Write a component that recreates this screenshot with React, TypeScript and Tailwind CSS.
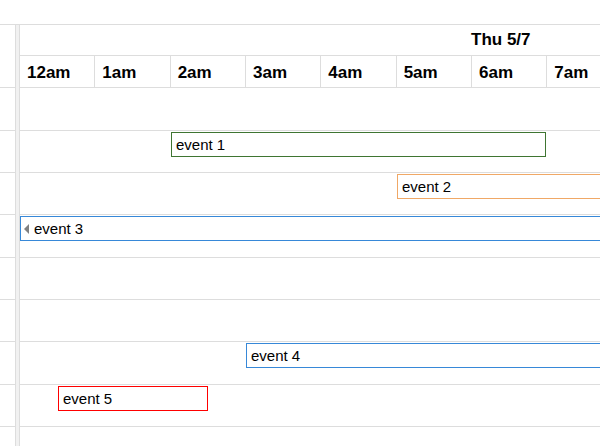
import React from "react";

// only the slots that fit in the visible window
const hours = ["12am", "1am", "2am", "3am", "4am", "5am", "6am", "7am"];

type Ev = { title: string; pos: string; border: string; cut?: boolean };
type Row = { h: string; ev?: Ev };

// resource rows, heights snapped to whole pixels
const rows: Row[] = [
  { h: "h-[43px]" },
  { h: "h-[42px]", ev: { title: "event 1", pos: "ml-[151px] w-[375px]", border: "border-[#3f7532]" } },
  { h: "h-[42px]", ev: { title: "event 2", pos: "ml-[377px] w-[900px]", border: "border-[#f0a866]" } },
  { h: "h-[43px]", ev: { title: "event 3", pos: "ml-0 w-[1200px]", border: "border-[#3788d8]", cut: true } },
  { h: "h-[42px]" },
  { h: "h-[42px]" },
  { h: "h-[43px]", ev: { title: "event 4", pos: "ml-[226px] w-[900px]", border: "border-[#3788d8]" } },
  { h: "h-[42px]", ev: { title: "event 5", pos: "ml-[38px] w-[150px]", border: "border-[#ff0000]" } },
  { h: "h-[42px]" },
];

function EventBar({ ev }: { ev: Ev }) {
  return (
    <div
      className={`h-[25px] shrink-0 border bg-white flex items-center pl-[4px] text-[15px] leading-none whitespace-nowrap ${ev.pos} ${ev.border}`}
    >
      {ev.cut && (
        <span className="mr-[5px] ml-[-1px] w-0 h-0 border-y-[5px] border-y-transparent border-r-[5px] border-r-[#808080]" />
      )}
      {ev.title}
    </div>
  );
}

export default function App() {
  return (
    <div className="w-[600px] h-[446px] overflow-hidden bg-white text-black font-['Liberation_Sans',Arial,sans-serif]">
      <div className="h-[24px]" />
      <div className="flex border-t border-[#ddd]">
        {/* resource column */}
        <div className="w-[15px] shrink-0">
          <div className="h-[63px] border-b border-[#ddd]" />
          {rows.map((r, i) => (
            <div key={i} className={`${r.h} border-b border-[#ddd]`} />
          ))}
        </div>

        {/* divider */}
        <div className="w-[5px] shrink-0 border-x border-[#ddd] bg-[#f1f1f1]" />

        {/* timeline */}
        <div className="flex-1 overflow-hidden">
          <div className="w-[1808px]">
            <div className="h-[31px] border-b border-[#ddd] flex items-center pl-[451px] text-[17px] font-bold">
              Thu 5/7
            </div>
            <div className="h-[32px] border-b border-[#ddd] flex">
              {hours.map((h) => (
                <div
                  key={h}
                  className="w-[75.33px] shrink-0 border-r border-[#ddd] flex items-center pl-[7px] pt-[2px] text-[17px] font-bold"
                >
                  {h}
                </div>
              ))}
            </div>
            {rows.map((r, i) => (
              <div key={i} className={`${r.h} border-b border-[#ddd] pt-[1px] flex flex-col`}>
                {r.ev && <EventBar ev={r.ev} />}
              </div>
            ))}
          </div>
        </div>
      </div>
    </div>
  );
}
